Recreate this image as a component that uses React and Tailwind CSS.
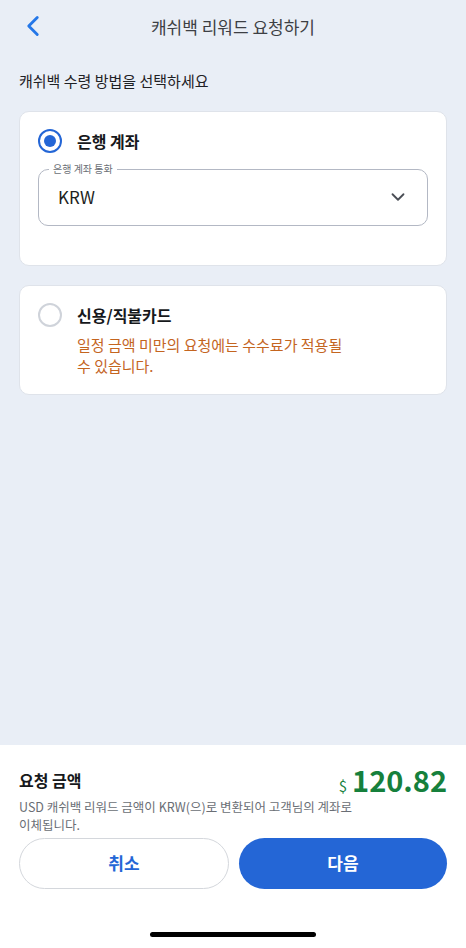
import { ChevronLeft, ChevronDown } from 'lucide-react';

const font = { fontFamily: '"Noto Sans CJK KR", "Noto Sans", sans-serif' };

const Radio = ({ checked }) => (
  <span
    className={`flex h-[24px] w-[24px] shrink-0 items-center justify-center rounded-full border-[2.5px] ${
      checked ? 'border-[#2466d6]' : 'border-[#cfd3da]'
    }`}
  >
    {checked && <span className="h-[12px] w-[12px] rounded-full bg-[#2466d6]" />}
  </span>
);

export default function App() {
  return (
    <div className="flex h-[948px] w-[466px] flex-col bg-[#e9eef6]" style={font}>
      {/* Header */}
      <div className="relative flex h-[54px] items-center justify-center">
        <ChevronLeft className="absolute left-[16px] top-[9px] h-[34px] w-[34px] text-[#2477e8]" strokeWidth={2} />
        <h1 className="text-[17px] text-[#3d3f44]">캐쉬백 리워드 요청하기</h1>
      </div>

      <div className="flex-1 px-[19px]">
        <p className="mt-[16px] text-[15px] text-[#1f2125]">캐쉬백 수령 방법을 선택하세요</p>

        {/* Bank account */}
        <div className="mt-[18px] rounded-[10px] border border-[#dfe3ea] bg-white px-[18px] pb-[39px] pt-[17px]">
          <div className="flex items-center gap-[15px]">
            <Radio checked />
            <span className="text-[16px] font-bold text-[#16181b]">은행 계좌</span>
          </div>
          <div className="relative mt-[16px] flex h-[57px] items-center justify-between rounded-[10px] border border-[#b3b8c4] pl-[19px] pr-[18px]">
            <span className="absolute -top-[8px] left-[10px] bg-white px-[4px] text-[10px] leading-[14px] text-[#6b6f76]">은행 계좌 통화</span>
            <span className="text-[17px] text-[#1d1f22]">KRW</span>
            <ChevronDown className="h-[22px] w-[22px] text-[#4a4e55]" strokeWidth={2} />
          </div>
        </div>

        {/* Card */}
        <div className="mt-[19px] rounded-[10px] border border-[#dfe3ea] bg-white px-[18px] pb-[18px] pt-[17px]">
          <div className="flex gap-[15px]">
            <Radio />
            <div className="flex flex-col">
              <span className="text-[16px] font-bold leading-[24px] text-[#16181b]">신용/직불카드</span>
              <p className="mt-[7px] text-[15px] leading-[21px] text-[#c4651f]">
                일정 금액 미만의 요청에는 수수료가 적용될
                <br />
                수 있습니다.
              </p>
            </div>
          </div>
        </div>
      </div>

      {/* Bottom panel */}
      <div className="h-[203px] bg-white px-[19px] pt-[17px]">
        <div className="flex items-center justify-between">
          <span className="text-[16px] font-bold text-[#16181b]">요청 금액</span>
          <span className="flex items-baseline text-[#16803c]">
            <span className="mr-[5px] text-[15px]">$</span>
            <span className="text-[29px] font-bold leading-[34px]">120.82</span>
          </span>
        </div>
        <p className="text-[12.5px] leading-[18px] text-[#6a6e75]">
          USD 캐쉬백 리워드 금액이 KRW(으)로 변환되어 고객님의 계좌로
          <br />
          이체됩니다.
        </p>
        <div className="mt-[4px] flex gap-[10px]">
          <button className="h-[51px] flex-1 rounded-full border border-[#d4d7dc] bg-white text-[17px] font-bold text-[#2466d6]">취소</button>
          <button className="h-[51px] flex-1 rounded-full bg-[#2466d6] text-[17px] font-bold text-white">다음</button>
        </div>
        <div className="mt-[43px] flex justify-center">
          <div className="h-[5px] w-[166px] rounded-full bg-black" />
        </div>
      </div>
    </div>
  );
}
